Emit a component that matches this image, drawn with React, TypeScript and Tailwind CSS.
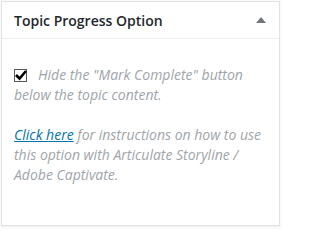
export default function App() {
  return (
    <div className="h-[229px] w-[282px] bg-[#fbfbfb] p-px" style={{ fontFamily: '"Open Sans", sans-serif' }}>
      <div className="flex h-[225px] w-[279px] flex-col border border-[#e2e2e2] bg-white shadow-[0_1px_1px_rgba(0,0,0,0.04)]">
        <div className="flex h-[37px] shrink-0 items-center justify-between border-b border-[#eeeeee] pl-[12px] pr-[12px]">
          <h2 className="text-[14px] font-semibold text-[#23282d]">Topic Progress Option</h2>
          <svg width="10" height="6" viewBox="0 0 10 6" className="mr-[1px]">
            <path d="M0 6 L5 0 L10 6 Z" fill="#72777c" />
          </svg>
        </div>
        <div className="px-[12px] pt-[26px] text-[14px] italic leading-[20px] text-[#a0a5aa]">
          <p>
            <span className="relative mr-[11px] inline-block h-[13px] w-[13px] translate-y-[1px] border border-[#5a5a5a] bg-white align-[-1px]">
              <svg width="14" height="12" viewBox="0 0 14 12" className="absolute left-[-1px] top-[-1px]">
                <path d="M2 6 L5.5 9.5 L12 2" fill="none" stroke="#000" strokeWidth="2.6" />
              </svg>
            </span>
            Hide the "Mark Complete" button below the topic content.
          </p>
          <p className="mt-[20px]">
            <a href="#" className="text-[#0073aa] underline">Click here</a> for instructions on how to use this option with Articulate Storyline / Adobe Captivate.
          </p>
        </div>
      </div>
    </div>
  );
}
